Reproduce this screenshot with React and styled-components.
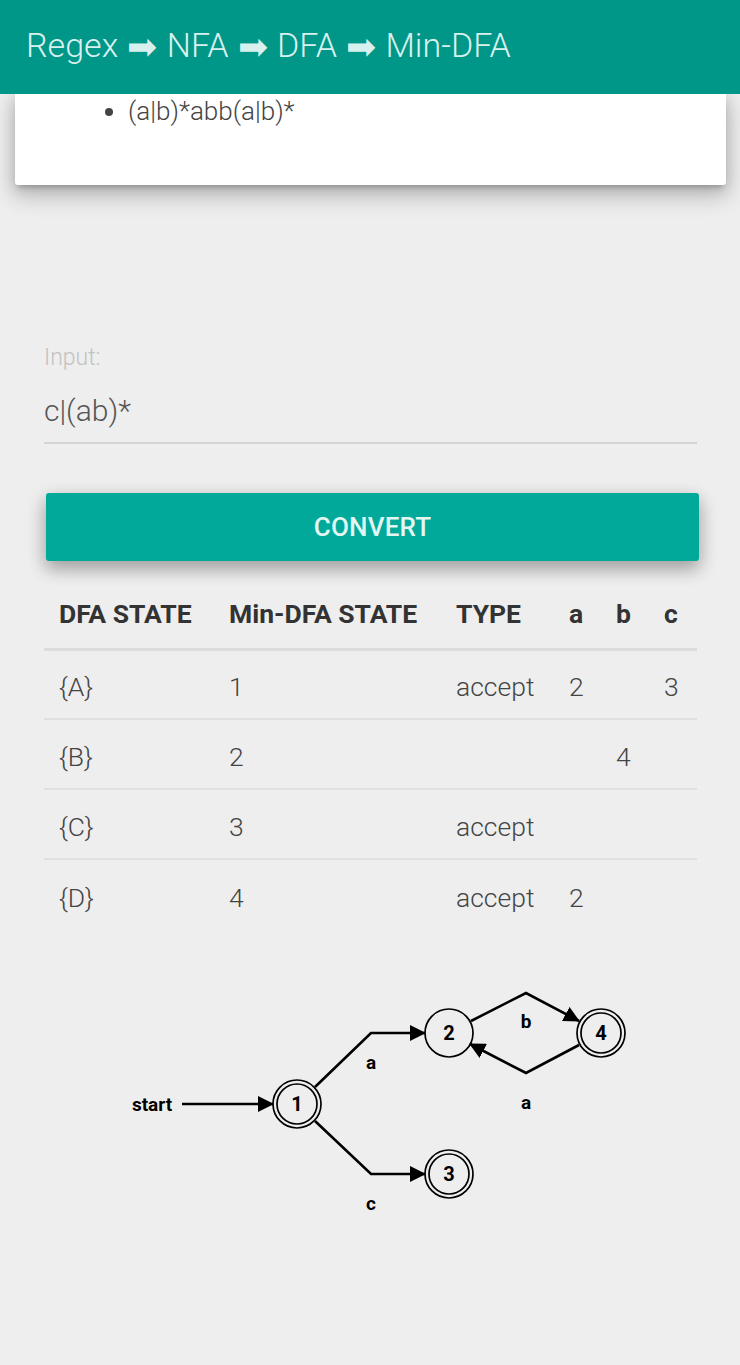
import React from "react";
import styled, { createGlobalStyle } from "styled-components";

const Global = createGlobalStyle`
  html, body { margin: 0; padding: 0; background: #eeeeee; }
  body { font-family: Roboto, "Noto Sans", sans-serif; }
  * { box-sizing: border-box; }
`;

const Page = styled.div`
  width: 740px;
  min-height: 1365px;
  background: #eeeeee;
  display: flex;
  flex-direction: column;
`;

const Header = styled.header`
  height: 94px;
  background: #009688;
  display: flex;
  align-items: center;
  padding: 0 0 4px 26px;
  position: relative;
  z-index: 2;
`;

const Title = styled.h1`
  margin: 0;
  font-family: Roboto, sans-serif;
  font-weight: 300;
  font-size: 34px;
  line-height: 40px;
  color: #d9f1ee;
  white-space: nowrap;
`;

const Arrow = styled.span`
  font-family: "DejaVu Sans", sans-serif;
  font-size: 36px;
  line-height: 1;
  display: inline-block;
  vertical-align: -2px;
  margin: 0 1px;
`;

const Card = styled.section`
  margin: 0 14px 0 15px;
  background: #ffffff;
  border-radius: 0 0 3px 3px;
  height: 91px;
  box-shadow: 0 10px 22px 2px rgba(0, 0, 0, 0.2), 0 3px 14px 2px rgba(0, 0, 0, 0.1),
    0 5px 5px -3px rgba(0, 0, 0, 0.2);
`;

const Examples = styled.ul`
  margin: 0;
  padding: 2px 0 0 113px;
  list-style: disc;
  font-size: 26px;
  line-height: 30px;
  font-weight: 300;
  color: #444;
`;

const Main = styled.main`
  padding: 0 43px 0 44px;
  display: flex;
  flex-direction: column;
`;

const Field = styled.label`
  display: flex;
  flex-direction: column;
  margin-top: 159px;
`;

const FieldLabel = styled.span`
  font-size: 23px;
  line-height: 28px;
  font-weight: 300;
  color: #c2c2c2;
`;

const TextInput = styled.input`
  margin-top: 15px;
  height: 57px;
  padding: 0 0 8px;
  border: none;
  border-bottom: 2px solid #d4d4d4;
  background: transparent;
  font-family: Roboto, sans-serif;
  font-weight: 300;
  font-size: 30px;
  color: #555;
  outline: none;
`;

const Button = styled.button`
  margin: 49px 0 0 2px;
  height: 68px;
  width: 653px;
  border: none;
  border-radius: 3px;
  background: #00a99a;
  color: #e2f6f2;
  font-family: Roboto, sans-serif;
  font-weight: 500;
  font-size: 26px;
  letter-spacing: 0.2px;
  text-transform: uppercase;
  box-shadow: 0 8px 17px 0 rgba(0, 0, 0, 0.2), 0 6px 20px 0 rgba(0, 0, 0, 0.19);
`;

const Table = styled.table`
  margin-top: 18px;
  width: 653px;
  border-collapse: collapse;
  table-layout: fixed;
`;

const Th = styled.th`
  height: 70px;
  padding: 0 0 0 15px;
  text-align: left;
  font-weight: 700;
  font-size: 26.5px;
  color: #333;
  border-bottom: 3px solid #dcdcdc;
  white-space: nowrap;
`;

const Tr = styled.tr`
  & + & td { border-top: 2px solid #e0e0e0; }
`;

const Td = styled.td`
  height: 70px;
  padding: 5px 0 0 15px;
  font-weight: 300;
  font-size: 26.5px;
  color: #444;
  white-space: nowrap;
`;

const Graph = styled.svg`
  margin-top: 31px;
  display: block;
`;

const rows = [
  ["{A}", "1", "accept", "2", "", "3"],
  ["{B}", "2", "", "", "4", ""],
  ["{C}", "3", "accept", "", "", ""],
  ["{D}", "4", "accept", "2", "", ""],
];

const widths = [170, 227, 113, 47, 48, 48];

function Node({ x, y, label, accept }) {
  return (
    <g>
      <circle cx={x} cy={y} r={24} fill="none" stroke="#000" strokeWidth={1.7} />
      {accept && <circle cx={x} cy={y} r={20} fill="none" stroke="#000" strokeWidth={1.7} />}
      <text x={x} y={y} textAnchor="middle" dominantBaseline="central" fontSize="20" fontWeight="700" fontFamily="Roboto, sans-serif">
        {label}
      </text>
    </g>
  );
}

function Label({ x, y, children }) {
  return (
    <text x={x} y={y} textAnchor="middle" dominantBaseline="central" fontSize="19" fontWeight="700" fontFamily="Roboto, sans-serif">
      {children}
    </text>
  );
}

export default function App() {
  return (
    <Page>
      <Global />
      <Header>
        <Title>
          Regex <Arrow>➡</Arrow> NFA <Arrow>➡</Arrow> DFA <Arrow>➡</Arrow> Min-DFA
        </Title>
      </Header>
      <Card>
        <Examples>
          <li>(a|b)*abb(a|b)*</li>
        </Examples>
      </Card>
      <Main>
        <Field>
          <FieldLabel>Input:</FieldLabel>
          <TextInput defaultValue="c|(ab)*" />
        </Field>
        <Button>Convert</Button>
        <Table>
          <colgroup>
            {widths.map((w, i) => (
              <col key={i} style={{ width: w }} />
            ))}
          </colgroup>
          <thead>
            <tr>
              <Th>DFA STATE</Th>
              <Th>Min-DFA STATE</Th>
              <Th>TYPE</Th>
              <Th>a</Th>
              <Th>b</Th>
              <Th>c</Th>
            </tr>
          </thead>
          <tbody>
            {rows.map((r, i) => (
              <Tr key={i}>
                {r.map((c, j) => (
                  <Td key={j}>{c}</Td>
                ))}
              </Tr>
            ))}
          </tbody>
        </Table>
        <Graph width="653" height="280" viewBox="0 0 653 280">
          <defs>
            <marker id="ah" viewBox="0 0 16 16" refX="15" refY="8" markerWidth="16" markerHeight="16" markerUnits="userSpaceOnUse" orient="auto">
              <path d="M0,0 L16,8 L0,16 z" fill="#000" />
            </marker>
          </defs>
          <g fill="none" stroke="#000" strokeWidth="2.6">
            <path d="M138,144 L229,144" markerEnd="url(#ah)" />
            <path d="M271,127 L327,73 L381,73" markerEnd="url(#ah)" />
            <path d="M271,161 L327,214 L381,214" markerEnd="url(#ah)" />
            <path d="M427,61 L482,33 L535,61" markerEnd="url(#ah)" />
            <path d="M535,85 L482,113 L426,84" markerEnd="url(#ah)" />
          </g>
          <Label x={108} y={144}>start</Label>
          <Label x={327} y={102}>a</Label>
          <Label x={327} y={243}>c</Label>
          <Label x={482} y={61}>b</Label>
          <Label x={482} y={142}>a</Label>
          <Node x={253} y={144} label="1" accept />
          <Node x={405} y={73} label="2" />
          <Node x={405} y={214} label="3" accept />
          <Node x={557} y={73} label="4" accept />
        </Graph>
      </Main>
    </Page>
  );
}
